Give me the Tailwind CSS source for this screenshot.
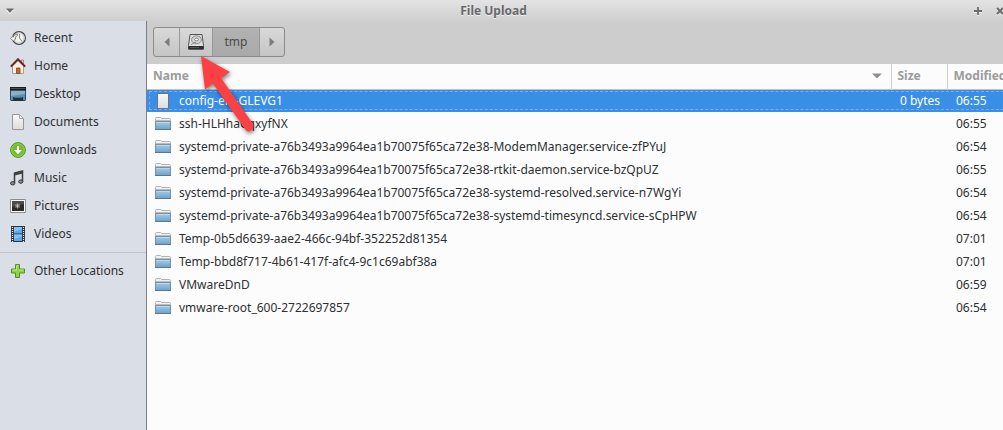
<!DOCTYPE html>
<html lang="en">
<head>
<meta charset="utf-8">
<title>File Upload</title>
<script src="https://cdn.jsdelivr.net/npm/@tailwindcss/browser@4"></script>
</head>
<body class="relative flex h-screen flex-col overflow-hidden bg-[#cdcdcd] font-['Noto_Sans',sans-serif] text-[12px] leading-4 text-[#2e3033]">

<svg class="absolute size-0" aria-hidden="true">
  <defs>
    <linearGradient id="folderFill" x1="0" y1="0" x2="0" y2="1"><stop offset="0" stop-color="#a9cbe4"/><stop offset="1" stop-color="#67a2cf"/></linearGradient>
    <linearGradient id="paperFill" x1="0" y1="0" x2="0" y2="1"><stop offset="0" stop-color="#fafafa"/><stop offset="1" stop-color="#dcdcdc"/></linearGradient>
    <symbol id="folder" viewBox="0 0 16 16">
      <path d="M.5 13V2.500q0-1 1-1h4l1 1h8q1 0 1 1V13z" fill="#f1f1f1" stroke="#b3b3b3"/>
      <path d="M1 4.500h14" stroke="#b9bcbe"/>
      <rect x=".5" y="5.500" width="15" height="8" fill="url(#folderFill)" stroke="#7593aa"/>
      <path d="M1.500 6.500h13" stroke="#bcd8ea"/>
      <path d="M0 13.500h16" stroke="#5f7688"/>
    </symbol>
  </defs>
</svg>

<header class="grid h-[21px] shrink-0 grid-cols-[1fr_auto_1fr] items-center bg-linear-to-b from-[#e3e3e3] to-[#cfcfcf] text-[#68696d]">
  <button aria-label="Window menu" class="ml-1 flex w-3 justify-center"><svg width="10" height="8" viewBox="0 0 10 8"><path d="M1 3h8L5 7z" fill="#fff"/><path d="M1 1.500h8L5 6z" fill="#6b6b6b"/></svg></button>
  <h1 class="pr-4 font-bold [text-shadow:0_1px_0_#f0f0f0]">File Upload</h1>
  <div class="-mr-0.5 flex justify-end gap-3">
    <button aria-label="Maximize"><svg width="10" height="10" viewBox="0 0 10 10"><path d="M5 2v8M1 6h8" stroke="#f2f2f2" stroke-width="2"/><path d="M5 1v8M1 5h8" stroke="#6b6b6b" stroke-width="1.800"/></svg></button>
    <button aria-label="Close"><svg width="10" height="10" viewBox="0 0 10 10"><path d="M2 3l6 6M8 3L2 9" stroke="#f2f2f2" stroke-width="2"/><path d="M2 2l6 6M8 2L2 8" stroke="#6b6b6b" stroke-width="2"/></svg></button>
  </div>
</header>

<div class="flex min-h-0 flex-1">
  <nav aria-label="Places" class="w-[147px] shrink-0 border-r border-[#7d7f84] bg-[#dadee6] pt-[3px] text-[#2e3033]">
    <ul>
      <li><a href="#" class="flex h-7 items-center gap-2 pl-[10px]">
        <svg width="16" height="16" viewBox="0 0 16 16"><circle cx="9" cy="8" r="6.400" fill="#f1f1ef" stroke="#454545" stroke-width="1.200"/><circle cx="9" cy="8" r="5.100" fill="none" stroke="#c4c4c4"/><path d="M9.500 4v4l2.500 3.500" fill="none" stroke="#8a8a8a"/><path d="M.4 8.500L3 5.800v1.400q1-3.200 4.500-3v1.600Q5 6 5 8.500h1L3.300 11z" fill="#f4f4f4" stroke="#707070" stroke-width=".8"/></svg>Recent</a></li>
      <li><a href="#" class="flex h-7 items-center gap-2 pl-[10px]">
        <svg width="16" height="16" viewBox="0 0 16 16"><path d="M11.500 2h2v5h-2z" fill="#e8ddd4" stroke="#8b6a5b" stroke-width=".7"/><path d="M2.500 8L8 2.500 13.500 8v7.500h-11z" fill="#f7ede3" stroke="#b09a8c"/><path d="M.8 8.600L8 1.300l7.200 7.300" fill="none" stroke="#6c2020" stroke-width="2"/><path d="M6.500 10h3.500v5.500H6.500z" fill="#bd6b2c" stroke="#7f4519" stroke-width=".8"/></svg>Home</a></li>
      <li><a href="#" class="flex h-7 items-center gap-2 pl-[10px]">
        <svg width="16" height="16" viewBox="0 0 16 16"><rect x=".5" y="1.500" width="15" height="13" rx=".6" fill="#5c8fb4" stroke="#2e4a60"/><path d="M1 5h14v3L1 10z" fill="#86b1cd"/><path d="M0 1h16v3.500H0z" fill="#17191c"/><path d="M1 2.500h14" stroke="#4a4e52"/><path d="M3 11h10v4H3z" fill="#26303a"/><path d="M4 11.500h8" stroke="#52677a"/></svg>Desktop</a></li>
      <li><a href="#" class="flex h-7 items-center gap-2 pl-[10px]">
        <svg width="16" height="16" viewBox="0 0 16 16"><path d="M2.500.5h7l4 4v11h-11z" fill="url(#paperFill)" stroke="#969696"/><path d="M9.500.5v4h4z" fill="#fff" stroke="#a9a9a9"/></svg>Documents</a></li>
      <li><a href="#" class="flex h-7 items-center gap-2 pl-[10px]">
        <svg width="16" height="16" viewBox="0 0 16 16"><circle cx="8" cy="8" r="7.400" fill="#72bd2d" stroke="#4f9420"/><circle cx="8" cy="8" r="6.300" fill="none" stroke="#98d55d" stroke-width=".8"/><path d="M7 4h2v4h3l-4 4.300L4 8h3z" fill="#fff"/></svg>Downloads</a></li>
      <li><a href="#" class="flex h-7 items-center gap-2 pl-[10px]">
        <svg width="16" height="16" viewBox="0 0 16 16"><path d="M4.500 13V3l8-2v10.500" fill="none" stroke="#3d3d3d" stroke-width="1.500"/><path d="M4.500 4.500l8-2" stroke="#3d3d3d" stroke-width="2.200"/><ellipse cx="2.700" cy="13.300" rx="2.100" ry="1.700" fill="#8b8b8b" stroke="#333"/><ellipse cx="10.800" cy="11.600" rx="2.100" ry="1.700" fill="#8b8b8b" stroke="#333"/></svg>Music</a></li>
      <li><a href="#" class="flex h-7 items-center gap-2 pl-[10px]">
        <svg width="16" height="16" viewBox="0 0 16 16"><path d="M.5 1.500h15v13H.5z" fill="#fafafa" stroke="#8d8d8d"/><path d="M2 3h12v10H2z" fill="#2b2b2b"/><path d="M2 3h12v3L2 9z" fill="#4c4c4c"/><path d="M7.500 5.500v5M5 8h5M5.700 6.200l3.600 3.600M9.300 6.200L5.700 9.800" stroke="#c8c8c8" stroke-width=".8"/></svg>Pictures</a></li>
      <li><a href="#" class="flex h-7 items-center gap-2 pl-[10px]">
        <svg width="16" height="16" viewBox="0 0 16 16"><path d="M1 0h14v16H1z" fill="#2e3439"/><path d="M4 1h8v6.500H4zM4 8.500h8V15H4z" fill="#5aa9ec"/><path d="M4 1h8v2L4 6zM4 8.500h8v2L4 13z" fill="#82c1f5"/><path d="M2.500 1v15M13.500 1v15" stroke="#eee" stroke-width="1.200" stroke-dasharray="1 1"/></svg>Videos</a></li>
    </ul>
    <hr class="my-1 border-[#c2c5c9]">
    <a href="#" class="flex h-7 items-center gap-2 pl-[10px]">
      <svg width="16" height="16" viewBox="0 0 16 16"><path d="M5.500 1.500h4v4.500h5v4h-5v4.500h-4V10h-4V6h4z" fill="#8ed245" stroke="#528f2a" stroke-linejoin="round"/><path d="M6.500 2.500h2M2.500 7h4V3M9 7h4.500" fill="none" stroke="#bbe987"/></svg>Other Locations</a>
  </nav>

  <main class="flex min-w-0 flex-1 flex-col">
    <div class="flex h-[43px] shrink-0 items-start pl-[6px] pt-[6px]">
      <div class="flex h-[30px] divide-x divide-[#989898] overflow-hidden rounded-[3px] border border-[#8b8b8b] bg-linear-to-b from-[#d9d9d9] to-[#c5c5c5] text-[#4a4a4a]">
        <button aria-label="Back" class="flex w-[26px] items-center justify-center"><svg width="6" height="10" viewBox="0 0 6 10"><path d="M5.500.5v9L.5 5z" fill="#7c7c7c"/></svg></button>
        <button aria-label="File system root" class="flex w-[33px] items-center justify-center"><svg width="16" height="16" viewBox="0 0 16 16"><path d="M2 .5h12l1.500 11v3.500H.5v-3.500z" fill="#dedede" stroke="#565656"/><path d="M.5 12h15v3.500H.5z" fill="#2d2d2d"/><path d="M2 13.500h9" stroke="#555"/><ellipse cx="8.500" cy="5.800" rx="4.900" ry="3.900" fill="#d6d6d6" stroke="#8a8a8a"/><ellipse cx="8.500" cy="5.500" rx="2" ry="1.400" fill="#eee" stroke="#8a8a8a"/><path d="M3 10.500l5-2.500" stroke="#8a8a8a"/></svg></button>
        <button aria-current="true" class="w-[47px] bg-linear-to-b from-[#b2b2b2] to-[#a9a9a9]">tmp</button>
        <button aria-label="Forward" class="flex w-6 items-center justify-center"><svg width="6" height="10" viewBox="0 0 6 10"><path d="M.5.5v9l5-4.500z" fill="#7c7c7c"/></svg></button>
      </div>
    </div>

    <div class="min-h-0 flex-1 overflow-hidden bg-[#fcfcfc]">
      <!-- The last column runs on past the window's right edge -->
      <table class="w-[calc(100%+8px)] table-fixed border-collapse">
        <colgroup><col><col class="w-14"><col class="w-16"></colgroup>
        <thead class="text-left text-[#9b9b9b]">
          <tr class="h-[25px] border-b border-[#c0bdba]">
            <th class="border-r border-[#cfcfcf] pl-[6px] pr-[9px]"><button class="flex w-full items-center justify-between font-bold">Name <svg width="10" height="6" viewBox="0 0 10 6"><path d="M0 .5h10L5 5.500z" fill="#8f8f8f"/></svg></button></th>
            <th class="border-r border-[#cfcfcf] pl-[6px]"><button class="font-bold">Size</button></th>
            <th class="pl-[6px]"><button class="font-bold">Modified</button></th>
          </tr>
        </thead>
        <tbody class="whitespace-nowrap">
          <tr class="h-[23px] bg-[#398ee7] text-white outline-1 -outline-offset-3 outline-dashed outline-[#74b0ee]">
            <td class="pl-2"><div class="flex items-center gap-2"><svg width="16" height="16" viewBox="0 0 16 16"><path d="M2.500.5h11v15h-11z" fill="url(#paperFill)" stroke="#77736c"/></svg>config-err-GLEVG1</div></td>
            <td class="pr-[7px] text-right">0 bytes</td><td class="pl-[9px]">06:55</td>
          </tr>
          <tr class="h-[23px]"><td class="pl-2"><div class="flex items-center gap-2"><svg width="16" height="16"><use href="#folder"/></svg>ssh-HLHhaCqxyfNX</div></td><td></td><td class="pl-[9px]">06:55</td></tr>
          <tr class="h-[23px]"><td class="pl-2"><div class="flex items-center gap-2"><svg width="16" height="16"><use href="#folder"/></svg>systemd-private-a76b3493a9964ea1b70075f65ca72e38-ModemManager.service-zfPYuJ</div></td><td></td><td class="pl-[9px]">06:54</td></tr>
          <tr class="h-[23px]"><td class="pl-2"><div class="flex items-center gap-2"><svg width="16" height="16"><use href="#folder"/></svg>systemd-private-a76b3493a9964ea1b70075f65ca72e38-rtkit-daemon.service-bzQpUZ</div></td><td></td><td class="pl-[9px]">06:55</td></tr>
          <tr class="h-[23px]"><td class="pl-2"><div class="flex items-center gap-2"><svg width="16" height="16"><use href="#folder"/></svg>systemd-private-a76b3493a9964ea1b70075f65ca72e38-systemd-resolved.service-n7WgYi</div></td><td></td><td class="pl-[9px]">06:54</td></tr>
          <tr class="h-[23px]"><td class="pl-2"><div class="flex items-center gap-2"><svg width="16" height="16"><use href="#folder"/></svg>systemd-private-a76b3493a9964ea1b70075f65ca72e38-systemd-timesyncd.service-sCpHPW</div></td><td></td><td class="pl-[9px]">06:54</td></tr>
          <tr class="h-[23px]"><td class="pl-2"><div class="flex items-center gap-2"><svg width="16" height="16"><use href="#folder"/></svg>Temp-0b5d6639-aae2-466c-94bf-352252d81354</div></td><td></td><td class="pl-[9px]">07:01</td></tr>
          <tr class="h-[23px]"><td class="pl-2"><div class="flex items-center gap-2"><svg width="16" height="16"><use href="#folder"/></svg>Temp-bbd8f717-4b61-417f-afc4-9c1c69abf38a</div></td><td></td><td class="pl-[9px]">07:01</td></tr>
          <tr class="h-[23px]"><td class="pl-2"><div class="flex items-center gap-2"><svg width="16" height="16"><use href="#folder"/></svg>VMwareDnD</div></td><td></td><td class="pl-[9px]">06:59</td></tr>
          <tr class="h-[23px]"><td class="pl-2"><div class="flex items-center gap-2"><svg width="16" height="16"><use href="#folder"/></svg>vmware-root_600-2722697857</div></td><td></td><td class="pl-[9px]">06:54</td></tr>
        </tbody>
      </table>
    </div>
  </main>
</div>

<!-- Callout arrow pointing at the root button -->
<svg class="pointer-events-none absolute left-[195px] top-[50px] drop-shadow-[1px_2px_2px_rgba(0,0,0,0.5)]" width="65" height="88" viewBox="0 0 65 88" aria-hidden="true">
  <path d="M6 6L35 22L26 28L58 74Q59.500 79 55.500 81Q52 82.500 50 79L18 33.500L10 39.500Z" fill="#fb4144"/>
</svg>
</body>
</html>
